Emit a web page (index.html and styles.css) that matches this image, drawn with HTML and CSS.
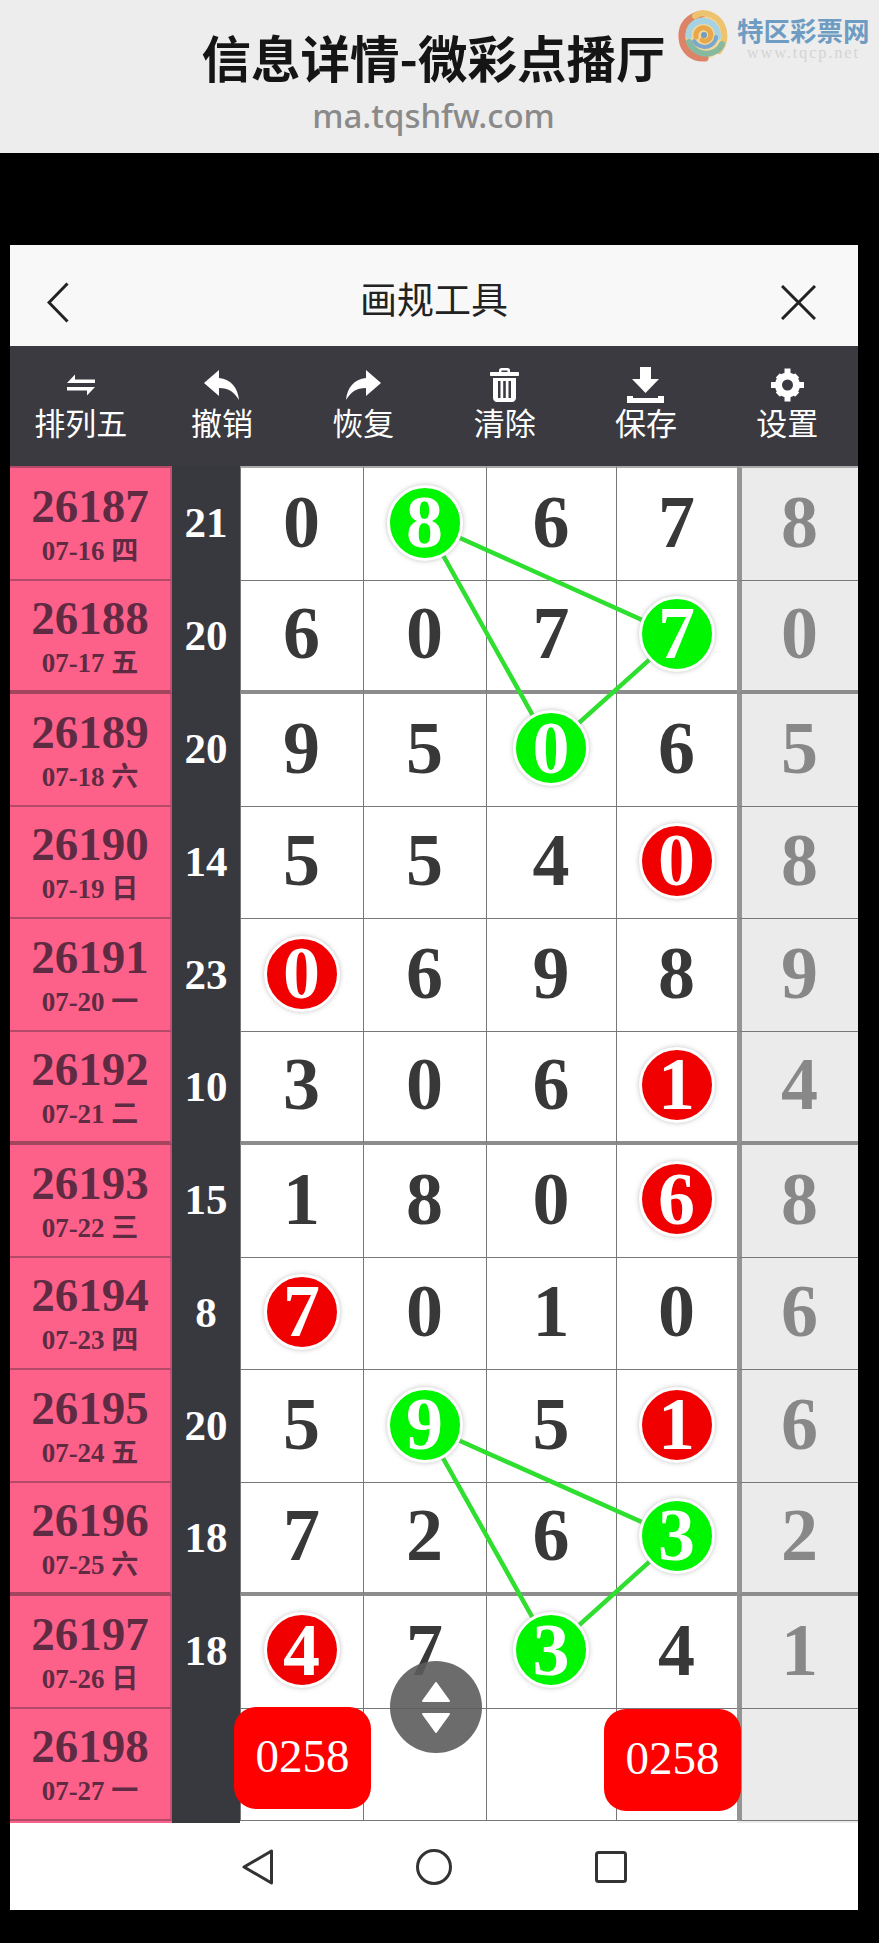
FILE: index.html
```html
<!DOCTYPE html>
<html lang="zh-CN">
<head>
  <meta charset="UTF-8" />
  <title>信息详情-微彩点播厅</title>
  <link rel="stylesheet" href="styles.css">
</head>
<body>
  <header class="site-head">
    <h1>信息详情-微彩点播厅</h1>
    <p class="site-url">ma.tqshfw.com</p>

    <div class="watermark">
      <svg class="wm-logo" viewBox="0 0 52 54" fill="none" stroke-linecap="round">
        <circle cx="26" cy="28" r="22" fill="#f1d79a"/>
        <path d="M25 5C12 7 4 16 5 29c1 13 11 21 23 20" stroke="#dd8468" stroke-width="7"/>
        <path d="M18 7C27 1 40 6 45 16c4 9 3 19-3 26" stroke="#eec36f" stroke-width="6"/>
        <path d="M12 33c5 11 17 15 27 9 3-2 5-4 6-7" stroke="#86b9a0" stroke-width="6"/>
        <path d="M12 27C11 17 19 11 28 12c8 1 13 7 13 16" stroke="#a6d3e4" stroke-width="6"/>
        <path d="M17 32c3 5 11 8 17 4 3-2 5-5 5-8" stroke="#7aa6cf" stroke-width="4"/>
        <path d="M19 28c-1-6 4-10 9-9 5 1 7 6 5 10-2 3-6 4-8 2" stroke="#e6a84a" stroke-width="5"/>
        <circle cx="27" cy="26" r="3" fill="#6f9cc2"/>
      </svg>
      <div class="wm-text">
        <div class="wm-name">特区彩票网</div>
        <div class="wm-site">www.tqcp.net</div>
      </div>
    </div>
  </header>

  <main class="panel">
    <div class="title-bar">
      <svg class="back-icon" viewBox="0 0 22 41" fill="none"><path d="M20.5 1.5 2 20.5l18.5 19"/></svg>
      <h2>画规工具</h2>
      <svg class="close-icon" viewBox="0 0 35 35" fill="none"><path d="M1 1l33 33M34 1 1 34"/></svg>
    </div>

    <nav class="toolbar">
      <div class="tool">
        <svg class="tool-icon" width="30" height="25" viewBox="0 0 30 25"><path d="M1 10.5 9 2v5h20v3.5zM29 14.5 21 23v-5H1v-3.500z"/></svg>
        <span>排列五</span>
      </div>
      <div class="tool">
        <svg class="tool-icon" width="35" height="30" viewBox="0 0 35 30"><path d="M0 13 15 0v8c12 1 19 10 20 22-5-8-10-12-20-12v8z"/></svg>
        <span>撤销</span>
      </div>
      <div class="tool">
        <svg class="tool-icon" width="35" height="30" viewBox="0 0 35 30"><path d="M35 13 20 0v8C8 9 1 18 0 30c5-8 10-12 20-12v8z"/></svg>
        <span>恢复</span>
      </div>
      <div class="tool">
        <svg class="tool-icon" width="29" height="34" viewBox="0 0 29 34">
          <path d="M9 4V2.500C9 1 10 0 11.500 0h6C19 0 20 1 20 2.500V4h8c.6 0 1 .4 1 1v2c0 .6-.4 1-1 1H1C.4 8 0 7.600 0 7V5c0-.6.4-1 1-1zm2.500 0h6V2.500h-6z"/>
          <path fill-rule="evenodd" d="M3 10h23v20c0 2.200-1.800 4-4 4H7c-2.200 0-4-1.800-4-4zm5 3v17h2.500V13zm5.200 0v17h2.600V13zm5.300 0v17H21V13z"/>
        </svg>
        <span>清除</span>
      </div>
      <div class="tool">
        <svg class="tool-icon" width="37" height="36" viewBox="0 0 37 36">
          <path d="M13 0h11v12h8L18.500 26 5 12h8zM0 29h6v2h25v-2h6v7H0z"/>
        </svg>
        <span>保存</span>
      </div>
      <div class="tool">
        <svg class="tool-icon" width="33" height="33" viewBox="0 0 33 33">
          <circle cx="16.500" cy="16.500" r="12.500"/>
          <path d="M13.500 0h6v33h-6z"/>
          <path d="M0 13.500h33v6H0z"/>
          <path d="M4.800 8.900 8.900 4.800l19.300 19.300-4.100 4.100z"/>
          <path d="M28.200 8.900 24.100 4.800 4.800 24.100l4.100 4.100z"/>
          <circle class="gear-hole" cx="16.500" cy="16.500" r="5.500"/>
        </svg>
        <span>设置</span>
      </div>
    </nav>

    <section class="board">
      <svg class="links" viewBox="0 0 848 1357">
        <path d="M414.500 56 666.500 169.500 541 282zM414.500 959 666.500 1071.500 541 1184.500z"/>
      </svg>

      <div class="row first">
        <div class="issue"><b>26187</b><i>07-16 四</i></div><div class="sum">21</div>
        <div class="cell">0</div><div class="cell"><span class="ball green">8</span></div><div class="cell">6</div><div class="cell">7</div><div class="cell extra">8</div>
      </div>
      <div class="row thick">
        <div class="issue"><b>26188</b><i>07-17 五</i></div><div class="sum">20</div>
        <div class="cell">6</div><div class="cell">0</div><div class="cell">7</div><div class="cell"><span class="ball green">7</span></div><div class="cell extra">0</div>
      </div>
      <div class="row">
        <div class="issue"><b>26189</b><i>07-18 六</i></div><div class="sum">20</div>
        <div class="cell">9</div><div class="cell">5</div><div class="cell"><span class="ball green">0</span></div><div class="cell">6</div><div class="cell extra">5</div>
      </div>
      <div class="row">
        <div class="issue"><b>26190</b><i>07-19 日</i></div><div class="sum">14</div>
        <div class="cell">5</div><div class="cell">5</div><div class="cell">4</div><div class="cell"><span class="ball red">0</span></div><div class="cell extra">8</div>
      </div>
      <div class="row">
        <div class="issue"><b>26191</b><i>07-20 一</i></div><div class="sum">23</div>
        <div class="cell"><span class="ball red">0</span></div><div class="cell">6</div><div class="cell">9</div><div class="cell">8</div><div class="cell extra">9</div>
      </div>
      <div class="row thick">
        <div class="issue"><b>26192</b><i>07-21 二</i></div><div class="sum">10</div>
        <div class="cell">3</div><div class="cell">0</div><div class="cell">6</div><div class="cell"><span class="ball red">1</span></div><div class="cell extra">4</div>
      </div>
      <div class="row">
        <div class="issue"><b>26193</b><i>07-22 三</i></div><div class="sum">15</div>
        <div class="cell">1</div><div class="cell">8</div><div class="cell">0</div><div class="cell"><span class="ball red">6</span></div><div class="cell extra">8</div>
      </div>
      <div class="row">
        <div class="issue"><b>26194</b><i>07-23 四</i></div><div class="sum">8</div>
        <div class="cell"><span class="ball red">7</span></div><div class="cell">0</div><div class="cell">1</div><div class="cell">0</div><div class="cell extra">6</div>
      </div>
      <div class="row">
        <div class="issue"><b>26195</b><i>07-24 五</i></div><div class="sum">20</div>
        <div class="cell">5</div><div class="cell"><span class="ball green">9</span></div><div class="cell">5</div><div class="cell"><span class="ball red">1</span></div><div class="cell extra">6</div>
      </div>
      <div class="row thick">
        <div class="issue"><b>26196</b><i>07-25 六</i></div><div class="sum">18</div>
        <div class="cell">7</div><div class="cell">2</div><div class="cell">6</div><div class="cell"><span class="ball green">3</span></div><div class="cell extra">2</div>
      </div>
      <div class="row">
        <div class="issue"><b>26197</b><i>07-26 日</i></div><div class="sum">18</div>
        <div class="cell"><span class="ball red">4</span></div><div class="cell">7</div><div class="cell"><span class="ball green">3</span></div><div class="cell">4</div><div class="cell extra">1</div>
      </div>
      <div class="row">
        <div class="issue"><b>26198</b><i>07-27 一</i></div><div class="sum"></div>
        <div class="cell"></div><div class="cell"></div><div class="cell"></div><div class="cell"></div><div class="cell extra"></div>
      </div>

      <div class="tag tag-left">0258</div>
      <div class="tag tag-right">0258</div>

      <div class="scroll-btn">
        <svg width="28" height="51" viewBox="0 0 28 51">
          <path d="M14 1 27 19H1zM1 32h26L14 50z"/>
        </svg>
      </div>
    </section>

    <footer class="sys-nav">
      <svg width="31" height="36" viewBox="0 0 31 36"><path d="M29.500 2v32L2 18z"/></svg>
      <svg width="36" height="36" viewBox="0 0 36 36"><circle cx="18" cy="18" r="16.500"/></svg>
      <svg width="32" height="32" viewBox="0 0 32 32"><rect x="1.500" y="1.500" width="29" height="29" rx="2"/></svg>
    </footer>
  </main>
</body>
</html>
```

FILE: styles.css
```css
* {
  box-sizing: border-box;
}
body {
  margin: 0;
  width: 879px;
  height: 1943px;
  overflow: hidden;
  background: #000;
  font-family: "Noto Sans CJK SC", sans-serif;
}

/* gray banner */
.site-head {
  position: relative;
  height: 153px;
  background: #ededed;
  text-align: center;
  padding: 24px 12px 0 0;
}
.site-head h1 {
  margin: 0 0 2px;
  font-size: 49.500px;
  line-height: 66px;
  font-weight: 700;
  color: #151515;
}
.site-url {
  margin: 0;
  font-family: "Noto Sans", sans-serif;
  font-size: 33px;
  font-weight: 500;
  line-height: 48px;
  color: #8a8a8a;
}
.watermark {
  position: absolute;
  left: 677px;
  top: 9px;
  display: flex;
  gap: 8px;
  text-align: left;
}
.wm-logo {
  width: 52px;
  height: 54px;
}
.wm-text {
  padding-top: 7px;
}
.wm-name {
  font-size: 26.500px;
  line-height: 28px;
  font-weight: 700;
  color: #6f9cc2;
  white-space: nowrap;
}
.wm-site {
  font-family: "Liberation Serif", serif;
  font-size: 16.500px;
  line-height: 18px;
  letter-spacing: 1.800px;
  color: #d4d4d4;
  text-align: center;
}

/* tool window */
.panel {
  width: 848px;
  margin: 92px 0 0 10px;
}
.title-bar {
  height: 101px;
  background: #f8f8f8;
  display: flex;
  align-items: center;
  justify-content: space-between;
  padding: 13px 42px 0 37px;
}
.title-bar h2 {
  margin: 0 0 0 18px;
  font-size: 37px;
  font-weight: 400;
  color: #222;
  padding-bottom: 9px;
}
.back-icon {
  width: 22px;
  height: 41px;
  stroke: #222;
  stroke-width: 3;
}
.close-icon {
  width: 35px;
  height: 35px;
  stroke: #222;
  stroke-width: 3;
}
.toolbar {
  height: 120px;
  background: #3a3a40;
  display: flex;
}
.tool {
  flex: 1;
  display: flex;
  flex-direction: column;
  align-items: center;
  padding-top: 20px;
  color: #fff;
  font-size: 31px;
  line-height: 36px;
}
.tool svg {
  display: block;
  height: 38px;
  fill: #fff;
}
.tool .gear-hole {
  fill: #3a3a40;
}

/* number board */
.board {
  position: relative;
  height: 1357px;
  overflow: hidden;
  background: linear-gradient(90deg, #fd618a 162px, #38383f 162px 230px, #fff 230px 727px, #ebebeb 727px);
}
.links {
  position: absolute;
  left: 0;
  top: 0;
  width: 848px;
  height: 1357px;
  z-index: 1;
  fill: none;
  stroke: #2fdf2f;
  stroke-width: 4.500;
}
.row {
  display: grid;
  grid-template-columns: 162px 68px 123px 123px 130px 121px 121px;
  height: 112.750px;
  font-family: "Liberation Serif", "Noto Sans CJK SC", serif;
  font-weight: 700;
}
.row.first {
  height: 115px;
}
.issue {
  background: #fd618a;
  border-right: 2px solid #c94f70;
  border-bottom: 2px solid #b54a68;
  display: flex;
  flex-direction: column;
  align-items: center;
  justify-content: center;
  padding-top: 2px;
  color: #5e2b43;
}
.first .issue {
  border-top: 2px solid #b54a68;
}
.thick .issue {
  border-bottom: 4px solid #a3455f;
}
.issue b {
  font-size: 47px;
  line-height: 48px;
}
.issue i {
  font-style: normal;
  font-size: 27px;
  line-height: 32px;
  margin-top: 5px;
}
.sum {
  background: #38383f;
  color: #fff;
  font-size: 43px;
  display: flex;
  align-items: center;
  justify-content: center;
  padding-bottom: 3px;
}
.cell {
  background: #fff;
  border-left: 1px solid #777;
  border-bottom: 1px solid #777;
  color: #383838;
  font-size: 74px;
  display: flex;
  align-items: center;
  justify-content: center;
  padding: 0 1px 3px 0;
}
.first .cell {
  border-top: 2px solid #aaa;
}
.thick .cell {
  border-bottom: 4px solid #8c8c8c;
}
.cell.extra {
  background: #ebebeb;
  border-left: 5px solid #949494;
  color: #888;
}
.ball {
  position: relative;
  z-index: 2;
  width: 76px;
  height: 76px;
  border-radius: 50%;
  border: 3px solid #fff;
  box-shadow: 0 0 5px rgba(150, 150, 150, .6);
  color: #fff;
  display: flex;
  align-items: center;
  justify-content: center;
}
.ball.green {
  background: #00f500;
}
.ball.red {
  background: #f00000;
}
.tag {
  position: absolute;
  z-index: 3;
  width: 137px;
  height: 102px;
  border-radius: 22px;
  background: #ff0000;
  color: #fff;
  font-family: "Liberation Serif", serif;
  font-size: 47px;
  display: flex;
  align-items: center;
  justify-content: center;
  padding-bottom: 4px;
}
.tag-left {
  left: 224px;
  top: 1241px;
}
.tag-right {
  left: 594px;
  top: 1243px;
}
.scroll-btn {
  position: absolute;
  z-index: 4;
  left: 380px;
  top: 1195px;
  width: 92px;
  height: 92px;
  border-radius: 50%;
  background: rgba(92, 92, 92, .9);
  display: flex;
  align-items: center;
  justify-content: center;
}
.scroll-btn svg {
  fill: #fff;
  stroke: #fff;
  stroke-width: 2;
  stroke-linejoin: round;
}

/* android nav */
.sys-nav {
  height: 87px;
  background: #fff;
  display: flex;
  align-items: center;
  gap: 143px;
  padding: 0 0 0 232px;
}
.sys-nav svg {
  fill: none;
  stroke: #333;
  stroke-width: 3;
  stroke-linejoin: round;
}
```
